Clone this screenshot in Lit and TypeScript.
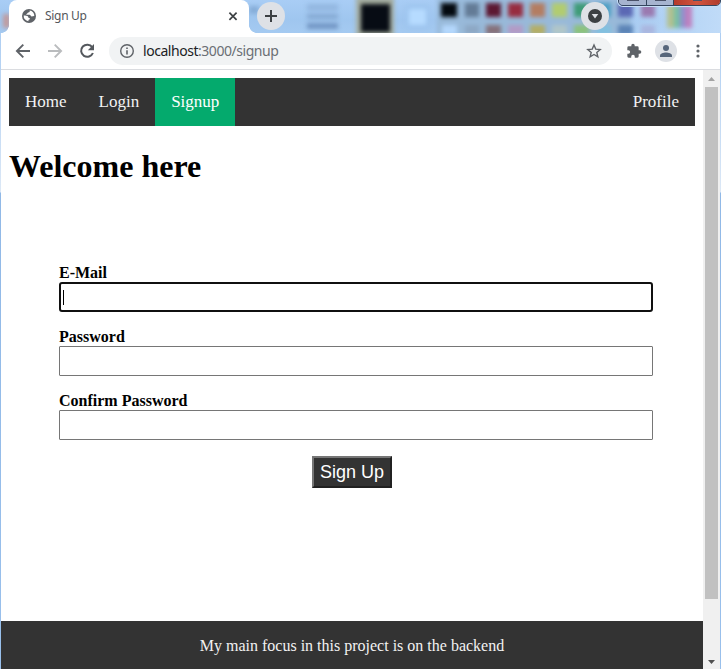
import { LitElement, html, svg, css } from "lit";
import { customElement, state } from "lit/decorators.js";

// Colour blotches seen through the translucent title bar: x, y, width, height, colour
const GLASS: [number, number, number, number, string][] = [
  [3, 14, 7, 14, "#c09a9c"],
  [249, 6, 10, 8, "#86add8"],
  [307, 4, 31, 7, "#93b7e0"],
  [307, 14, 31, 5, "#84a8d2"],
  [307, 23, 31, 6, "#7296c4"],
  [356, -3, 38, 40, "#a5ad9f"],
  [361, 4, 29, 28, "#070c14"],
  [406, 5, 23, 24, "#9dc4ee"],
  [409, 9, 17, 16, "#b6dbff"],
  [437, -2, 194, 38, "#98b9d9"],
  [441, 3, 16, 14, "#03090f"],
  [465, 3, 14, 14, "#637b96"],
  [486, 3, 15, 14, "#5c1832"],
  [508, 3, 15, 14, "#972c40"],
  [530, 3, 15, 14, "#b37d62"],
  [552, 3, 15, 14, "#b1cc70"],
  [574, 3, 15, 14, "#3f9c78"],
  [596, 3, 15, 14, "#4c9fc4"],
  [618, 3, 15, 14, "#5b68b4"],
  [641, 3, 14, 14, "#9a7ab0"],
  [442, 25, 15, 10, "#b3d7fc"],
  [465, 25, 14, 10, "#8da8c5"],
  [486, 25, 15, 10, "#86717b"],
  [508, 25, 15, 10, "#b29bc6"],
  [530, 25, 15, 10, "#b3ae67"],
  [552, 25, 15, 10, "#b0c6c9"],
  [574, 25, 15, 10, "#8cc27d"],
  [596, 25, 15, 10, "#83c0df"],
  [618, 25, 15, 10, "#5b83b6"],
  [641, 25, 14, 10, "#a9b6df"],
  [667, 5, 8, 23, "#b2c08f"],
  [674, 5, 7, 23, "#78bfa6"],
  [680, 5, 6, 23, "#8e91cf"],
  [685, 5, 7, 23, "#bd80bf"],
];

@customElement("browser-titlebar")
export class BrowserTitlebar extends LitElement {
  static styles = css`
    :host { display: block; height: 33px; position: relative; overflow: hidden;
      background: linear-gradient(#a9cdf5, #9fc6ef 60%, #a5caf1); font-family: "Noto Sans", sans-serif; }
    svg { display: block; }
    .glass { position: absolute; inset: 0; }
    .row { position: relative; display: flex; height: 33px; }
    .tab { position: relative; width: 240px; margin-left: 9px; flex: none; box-sizing: border-box;
      background: #fff; border-radius: 8px 8px 0 0; display: flex; align-items: center; padding: 0 8px 1px 13px; }
    .tab::before, .tab::after { content: ""; position: absolute; bottom: 0; width: 8px; height: 8px; }
    .tab::before { left: -8px; background: radial-gradient(circle at 0 0, transparent 7.6px, #fff 8.2px); }
    .tab::after { right: -8px; background: radial-gradient(circle at 100% 0, transparent 7.6px, #fff 8.2px); }
    .title { flex: 1; margin-left: 9px; font-size: 12px; line-height: 16px; color: #54575b; letter-spacing: -0.3px; }
    .round { width: 28px; height: 28px; margin-top: 2px; border-radius: 50%; background: #dee1e6;
      display: grid; place-items: center; flex: none; }
    .add { margin-left: 8px; }
    .search { margin-left: 296px; }
    .caption { position: absolute; right: 0; top: -5px; display: flex; height: 11px; box-sizing: border-box; width: 103px;
      border: 1px solid #35465f; border-radius: 0 0 5px 5px; overflow: hidden; box-shadow: 0 0 0 1px #c6def5; }
    .caption span { width: 28px; box-sizing: border-box; background: #a6b4cf; border-right: 1px solid #35465f; position: relative; }
    .caption span:nth-child(2) { width: 27px; }
    .caption span:last-child { flex: 1; border: 0; background: linear-gradient(90deg, #b43a2b, #d2553f 50%, #b03c2c); }
    .caption span::after { content: ""; position: absolute; left: 8px; right: 7px; top: 3px; height: 2px; background: #4a5268; }
    .caption span:last-child::after { left: 19px; right: 18px; }
  `;
  render() {
    return html`
      <svg class="glass" width="721" height="33" viewBox="0 0 721 33">
        <defs>
          <filter id="soft" x="-10%" y="-30%" width="120%" height="160%" color-interpolation-filters="sRGB"><feGaussianBlur stdDeviation="2.2" /></filter>
          <linearGradient id="side"><stop offset="0" stop-color="#bcd9f8" stop-opacity="0" /><stop offset="1" stop-color="#c0dbf8" /></linearGradient>
        </defs>
        <rect x="590" width="131" height="33" fill="url(#side)" />
        <g filter="url(#soft)">
          ${GLASS.map(([x, y, w, h, c]) => svg`<rect x=${x} y=${y} width=${w} height=${h} fill=${c} />`)}
        </g>
      </svg>
      <div class="row">
        <div class="tab">
          <svg width="14" height="14" viewBox="0 0 14 14">
            <circle cx="7" cy="7" r="7" fill="#5f6368" />
            <path d="M7.6 1.5C8 2.8 7.5 3.4 6.3 3.5c-.9.1-.7 1.2-1.7 1.4-.6.1-.4.9.2.9h2.8c1 0 .9 1.5 2 1.6.8.1 1.5-.5 2.7-.4a5.3 5.3 0 0 0-4.7-5.5ZM1.7 6.5c1.7 0 3.5.1 4.1.8.7.7.2 1.6 1.2 1.6 1.3.1 1.2 1.4.3 1.7-1 .3-.9.9-.9 1.7A5.4 5.4 0 0 1 1.7 6.5Z" fill="#fff" />
          </svg>
          <span class="title">Sign Up</span>
          <svg width="16" height="16" viewBox="0 0 16 16"><path d="m4.4 4.6 7.2 7.2m0-7.2-7.2 7.2" stroke="#3c4043" stroke-width="1.7" /></svg>
        </div>
        <div class="round add"><svg width="14" height="14" viewBox="0 0 14 14"><path d="M7 1v12M1 7h12" stroke="#3c4043" stroke-width="2" /></svg></div>
        <div class="round search"><svg width="14" height="14" viewBox="0 0 14 14"><circle cx="7" cy="7" r="7" fill="#3c4043" /><path d="M3.7 5h6.6L7 9.6Z" fill="#dee1e6" /></svg></div>
      </div>
      <div class="caption"><span></span><span></span><span></span></div>
    `;
  }
}

@customElement("browser-toolbar")
export class BrowserToolbar extends LitElement {
  static styles = css`
    :host { display: flex; align-items: center; height: 37px; box-sizing: border-box; background: #fff;
      border-bottom: 1px solid #dadce0; padding: 0 11px 0 14px; margin: 0 1px; font-family: "Noto Sans", sans-serif; }
    svg { display: block; flex: none; }
    .nav { display: flex; gap: 16px; }
    .bar { width: 503px; height: 28px; margin-left: 14px; border-radius: 14px; background: #f1f3f4; box-sizing: border-box;
      display: flex; align-items: center; padding: 0 10px; flex: none; }
    .url { flex: 1; margin-left: 8px; font-size: 14px; line-height: 20px; letter-spacing: -0.46px; color: #6b6f74; white-space: nowrap; }
    .host { color: #202124; }
    .puzzle { margin-left: 14px; }
    .avatar { width: 22px; height: 22px; margin-left: 13px; border-radius: 50%; background: #dee1e6; display: grid; place-items: center; flex: none; }
    .dots { margin-left: 19px; }
  `;
  render() {
    return html`
      <div class="nav">
        <svg width="16" height="16" viewBox="0 0 16 16"><path d="M15 8H2M8.3 1.6 1.9 8l6.4 6.4" fill="none" stroke="#5f6368" stroke-width="1.9" /></svg>
        <svg width="16" height="16" viewBox="0 0 16 16"><path d="M1 8h13M7.7 1.6 14.1 8l-6.4 6.4" fill="none" stroke="#babcbe" stroke-width="1.9" /></svg>
        <svg width="16" height="16" viewBox="0 0 16 16"><path d="M13.2 4.2A6.1 6.1 0 1 0 13.9 10" fill="none" stroke="#54585d" stroke-width="2" /><path d="M15 1v6.2H8.8Z" fill="#54585d" /></svg>
      </div>
      <div class="bar">
        <svg width="16" height="16" viewBox="0 0 16 16"><circle cx="8" cy="8" r="6.3" fill="none" stroke="#5f6368" stroke-width="1.4" /><path d="M8 7.2v4.2M8 4.4v1.7" stroke="#5f6368" stroke-width="1.6" /></svg>
        <span class="url"><span class="host">localhost</span>:3000/signup</span>
        <svg width="16" height="16" viewBox="0 0 16 16"><path d="m8 2 1.75 4.1 4.45.4-3.4 2.95 1.05 4.35L8 11.5l-3.85 2.3L5.2 9.45 1.8 6.5l4.45-.4Z" fill="none" stroke="#5f6368" stroke-width="1.4" /></svg>
      </div>
      <svg class="puzzle" width="16" height="16" viewBox="0 0 24 24"><path fill="#5f6368" d="M20.5 11H19V7a2 2 0 0 0-2-2h-4V3.500a2.500 2.500 0 0 0-5 0V5H4a2 2 0 0 0-2 2v3.800h1.500a2.700 2.700 0 0 1 0 5.400H2V20a2 2 0 0 0 2 2h3.800v-1.500a2.700 2.700 0 0 1 5.400 0V22H17a2 2 0 0 0 2-2v-4h1.500a2.500 2.500 0 0 0 0-5Z" /></svg>
      <div class="avatar"><svg width="12" height="12" viewBox="0 0 12 12"><circle cx="6" cy="3" r="3" fill="#56657a" /><path d="M0 12v-1.400C0 8.500 3.500 7.500 6 7.500s6 1 6 3.100V12Z" fill="#56657a" /></svg></div>
      <svg class="dots" width="4" height="14" viewBox="0 0 4 14" fill="#5f6368"><circle cx="2" cy="2" r="1.600" /><circle cx="2" cy="7" r="1.600" /><circle cx="2" cy="12" r="1.600" /></svg>
    `;
  }
}

@customElement("signup-page")
export class SignupPage extends LitElement {
  static styles = css`
    :host { display: flex; flex-direction: column; flex: 1; min-width: 0; background: #fff; color: #000;
      font: 16px "Liberation Serif", serif; }
    nav { display: flex; margin: 8px 8px 0; background: #333; }
    nav a { padding: 14px 16px; font-size: 17px; line-height: 20px; color: #f2f2f2; text-decoration: none; }
    nav a.active { background: #04aa6d; color: #fff; }
    nav a.right { margin-left: auto; }
    h1 { margin: 22px 8px 0; font-size: 32px; line-height: 37px; }
    form { margin: 78px 50px 0 58px; display: flex; flex-direction: column; }
    label { display: block; font-weight: bold; line-height: 19px; margin-bottom: 15px; }
    .field { display: flex; align-items: center; box-sizing: border-box; height: 30px; padding: 0 3px;
      border: 1px solid #767676; border-radius: 1px; background: #fff; }
    .field.focus { border: 2px solid #101010; border-radius: 3px; padding-left: 2px; }
    .caret { width: 1px; height: 15px; background: #000; }
    button { align-self: center; margin: 1px 8px 0 0; width: 80px; height: 32px; box-sizing: border-box; padding: 0; background: #333; color: #fff;
      border: 2px solid; border-color: #767676 #212121 #212121 #767676; font: 18px "Liberation Sans", sans-serif; }
    footer { margin-top: auto; height: 48px; background: #333; color: #f2f2f2; text-align: center; line-height: 50px; font-size: 16px; }
  `;
  @state() private focused = "E-Mail";
  render() {
    return html`
      <nav><a>Home</a><a>Login</a><a class="active">Signup</a><a class="right">Profile</a></nav>
      <h1>Welcome here</h1>
      <form>
        ${["E-Mail", "Password", "Confirm Password"].map((name) => html`
          <label>${name}
            <div class="field ${name === this.focused ? "focus" : ""}">${name === this.focused ? html`<span class="caret"></span>` : ""}</div>
          </label>`)}
        <button type="button">Sign Up</button>
      </form>
      <footer>My main focus in this project is on the backend</footer>
    `;
  }
}

@customElement("app-root")
export class AppRoot extends LitElement {
  static styles = css`
    :host { display: flex; flex-direction: column; height: 669px; overflow: hidden;
      background: linear-gradient(#a6caf2, #c3daf4 120px, #dce8f6 192px, #91b9e7 193px, #99c0ec); }
    .view { flex: 1; min-height: 0; display: flex; margin: 0 1px; }
    .scroll { width: 17px; background: #f0f0f0; display: flex; flex-direction: column; align-items: center; flex: none; }
    .arrow { height: 17px; display: grid; place-items: center; }
    .thumb { width: 13px; height: 512px; background: #c1c1c1; }
    .down { margin-top: auto; height: 15px; }
  `;
  render() {
    return html`
      <browser-titlebar></browser-titlebar>
      <browser-toolbar></browser-toolbar>
      <div class="view">
        <signup-page></signup-page>
        <div class="scroll">
          <div class="arrow"><svg width="7" height="4" viewBox="0 0 7 4"><path d="M0 4 3.500 0 7 4Z" fill="#a3a3a3" /></svg></div>
          <div class="thumb"></div>
          <div class="arrow down"><svg width="7" height="4" viewBox="0 0 7 4"><path d="M0 0h7L3.500 4Z" fill="#505050" /></svg></div>
        </div>
      </div>
    `;
  }
}
